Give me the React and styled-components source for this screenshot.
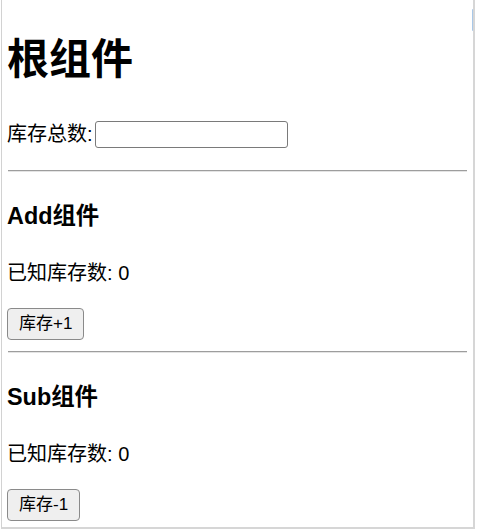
import React, { useState } from "react";
import styled, { createGlobalStyle } from "styled-components";

const Global = createGlobalStyle`
  html, body { margin: 0; padding: 0; background: #ffffff; }
  body {
    font-family: "Liberation Sans", "Noto Sans CJK SC", sans-serif;
    color: #000;
  }
  * { box-sizing: border-box; }
`;

const Frame = styled.div`
  position: relative;
  margin-left: 1px;
  width: 474px;
  height: 529px;
  border-left: 1px solid #d2d2d2;
  border-right: 2px solid #d6d6d6;
  border-bottom: 2px solid #d6d6d6;
  overflow: hidden;
`;

const ScrollThumb = styled.div`
  position: absolute;
  top: 9px;
  right: -2px;
  width: 3px;
  height: 22px;
  background: #a9c8e8;
  border-radius: 1px;
`;

const Content = styled.div`
  display: flex;
  flex-direction: column;
  align-items: flex-start;
  padding: 0 6px 0 5px;
`;

const Title = styled.h1`
  margin: 35px 0 0 0;
  font-size: 42px;
  line-height: 50px;
  font-weight: 700;
`;

const StockRow = styled.div`
  margin-top: 36px;
  display: flex;
  align-items: center;
  height: 27px;
  font-size: 20px;
  line-height: 27px;
`;

const StockInput = styled.input`
  width: 193px;
  height: 27px;
  margin: 0 0 0 2px;
  padding: 0 4px;
  border: 1px solid #7a7a7a;
  border-radius: 3px;
  background: #fff;
  font-size: 17px;
  font-family: inherit;
`;

const Divider = styled.hr`
  align-self: stretch;
  margin: ${(p) => p.$top}px 0 0 1px;
  height: 2px;
  border: none;
  border-top: 1px solid #9d9d9d;
  border-bottom: 1px solid #e4e4e4;
`;

const SectionTitle = styled.h3`
  margin: 30px 0 0 0;
  font-size: 23.4px;
  line-height: 28px;
  font-weight: 700;
`;

const Known = styled.p`
  margin: 31px 0 0 0;
  font-size: 20px;
  line-height: 24px;
`;

const ActionButton = styled.button`
  margin-top: 23px;
  height: 32px;
  padding: 0 11px;
  border: 1px solid #8a8a8a;
  border-radius: 4px;
  background: #efefef;
  color: #000;
  font-family: inherit;
  font-size: 17px;
  line-height: 30px;
`;

function Section({ name, count, label, onClick, top }) {
  return (
    <>
      <Divider $top={top} />
      <SectionTitle>{name}组件</SectionTitle>
      <Known>已知库存数: {count}</Known>
      <ActionButton onClick={onClick}>{label}</ActionButton>
    </>
  );
}

export default function App() {
  const [count, setCount] = useState(0);
  return (
    <>
      <Global />
      <Frame>
        <ScrollThumb />
        <Content>
          <Title>根组件</Title>
          <StockRow>
            库存总数:
            <StockInput type="text" />
          </StockRow>
          <Section
            name="Add"
            count={count}
            label="库存+1"
            top={22}
            onClick={() => setCount(count)}
          />
          <Section
            name="Sub"
            count={count}
            label="库存-1"
            top={11}
            onClick={() => setCount(count)}
          />
        </Content>
      </Frame>
    </>
  );
}
